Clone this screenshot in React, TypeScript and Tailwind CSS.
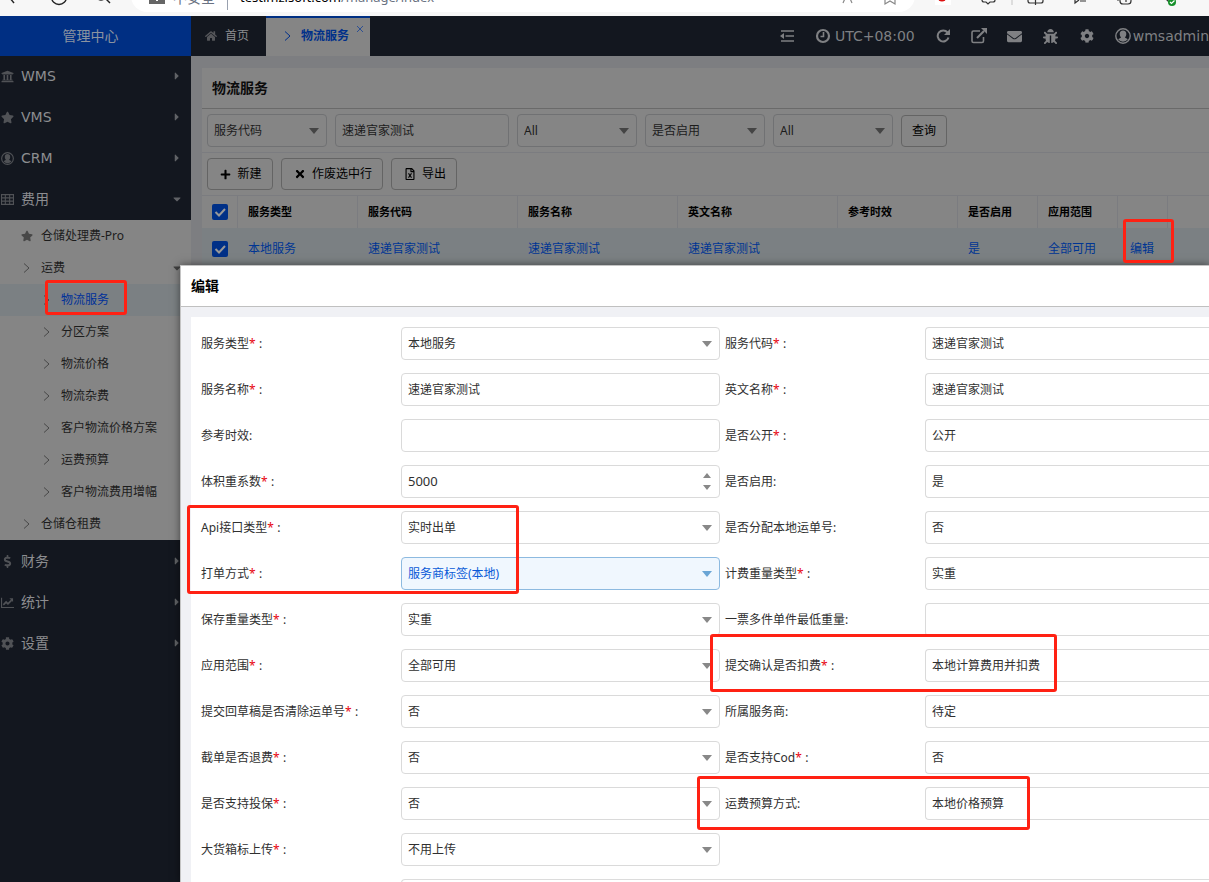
import type { ReactNode } from "react";
import {
    FaHome, FaUniversity, FaStar, FaDollarSign, FaCog,
    FaBug, FaEnvelope, FaRegFileExcel, FaPlus, FaTimes, FaCaretRight, FaCaretDown
} from "react-icons/fa";

const mainMenu = [
    { name: "WMS", icon: FaUniversity },
    { name: "VMS", icon: FaStar },
    { name: "CRM", icon: UserRing },
    { name: "费用", icon: GridIcon, open: true },
];

const subMenu = [
    { name: "仓储处理费-Pro", level: 1, star: true },
    { name: "运费", level: 1, open: true },
    { name: "物流服务", level: 2, active: true },
    { name: "分区方案", level: 2 },
    { name: "物流价格", level: 2 },
    { name: "物流杂费", level: 2 },
    { name: "客户物流价格方案", level: 2 },
    { name: "运费预算", level: 2 },
    { name: "客户物流费用增幅", level: 2 },
    { name: "仓储仓租费", level: 1 },
];

const bottomMenu = [
    { name: "财务", icon: FaDollarSign },
    { name: "统计", icon: TrendIcon },
    { name: "设置", icon: FaCog },
];

const columns = [
    { title: "服务类型", value: "本地服务", width: "w-[120px]" },
    { title: "服务代码", value: "速递官家测试", width: "w-40" },
    { title: "服务名称", value: "速递官家测试", width: "w-40" },
    { title: "英文名称", value: "速递官家测试", width: "w-40" },
    { title: "参考时效", value: "", width: "w-[120px]" },
    { title: "是否启用", value: "是", width: "w-20" },
    { title: "应用范围", value: "全部可用", width: "w-20" },
];

type FieldDef = {
    label: string;
    value: string;
    required?: boolean;
    kind?: "select" | "text" | "number";
    focused?: boolean;
};

// left and right field of every form row
const rows: [FieldDef, FieldDef | null][] = [
    [{ label: "服务类型", value: "本地服务", required: true }, { label: "服务代码", value: "速递官家测试", required: true, kind: "text" }],
    [{ label: "服务名称", value: "速递官家测试", required: true, kind: "text" }, { label: "英文名称", value: "速递官家测试", required: true, kind: "text" }],
    [{ label: "参考时效", value: "", kind: "text" }, { label: "是否公开", value: "公开", required: true }],
    [{ label: "体积重系数", value: "5000", required: true, kind: "number" }, { label: "是否启用", value: "是" }],
    [{ label: "Api接口类型", value: "实时出单", required: true }, { label: "是否分配本地运单号", value: "否" }],
    [{ label: "打单方式", value: "服务商标签(本地)", required: true, focused: true }, { label: "计费重量类型", value: "实重", required: true }],
    [{ label: "保存重量类型", value: "实重", required: true }, { label: "一票多件单件最低重量", value: "", kind: "text" }],
    [{ label: "应用范围", value: "全部可用", required: true }, { label: "提交确认是否扣费", value: "本地计算费用并扣费", required: true }],
    [{ label: "提交回草稿是否清除运单号", value: "否", required: true }, { label: "所属服务商", value: "待定" }],
    [{ label: "截单是否退费", value: "否", required: true }, { label: "是否支持Cod", value: "否", required: true }],
    [{ label: "是否支持投保", value: "否", required: true }, { label: "运费预算方式", value: "本地价格预算" }],
    [{ label: "大货箱标上传", value: "不用上传", required: true }, null],
];

export default function App() {
    return (
        <div className="relative h-screen overflow-hidden flex flex-col bg-[#7d7e81] text-xs text-[#1c1c1c] font-['Noto_Sans','Noto_Sans_CJK_SC',sans-serif]">
            <BrowserStrip />
            <div className="flex flex-1 min-h-0">
                <Sidebar />
                <div className="flex-1 min-w-0 flex flex-col">
                    <TopBar />
                    <ServiceList />
                </div>
            </div>
            <EditDialog />

            {/* Marked areas */}
            <Mark className="left-[45px] top-[280px] w-[82px] h-[35px]" />
            <Mark className="left-[1123px] top-[219px] w-[51px] h-11" />
            <Mark className="left-[187px] top-[505px] w-[332px] h-[89px]" />
            <Mark className="left-[710px] top-[634px] w-[347px] h-[58px]" />
            <Mark className="left-[697px] top-[776px] w-[333px] h-[54px]" />
        </div>
    );
}

function Mark({ className }: { className: string }) {
    return <div className={`absolute border-3 border-[#ff2113] rounded-[3px] pointer-events-none ${className}`} />;
}

function BrowserStrip() {
    return (
        <div className="relative h-4 shrink-0 bg-[#f7f7f7] overflow-hidden">
            <svg className="absolute left-0 top-0" width="120" height="8" fill="none" stroke="#222" strokeWidth="1.4">
                <path d="M9 -3l5 6" />
                <circle cx="59" cy="-3" r="7.5" />
                <path d="M103 -4l7 7" />
                <circle cx="101" cy="-5" r="5" />
            </svg>
            <div className="absolute left-[131px] right-[294px] bottom-1 h-8 pt-1 rounded-b-2xl bg-white flex items-center pl-4 text-[13px] text-gray-500">
                <svg width="20" height="16" viewBox="0 0 20 16">
                    <path d="M2 14h16V7H2z" fill="#666" />
                    <path d="M10 7v4" stroke="#fff" strokeWidth="2" />
                </svg>
                <span className="ml-1.5 w-11 text-sm">不安全</span>
                <span className="ml-2.5 mr-3 w-px h-6 bg-gray-400" />
                <span className="text-black">testimzisoft.com</span>
                <span>/manage/index</span>
            </div>
            <svg className="absolute right-0 top-0" width="377" height="8" fill="none" stroke="#333" strokeWidth="1.2">
                <path d="M11 3l4-9M20 3l-4-9M53 -3v7l5-3 5 3v-7" stroke="#888" />
                <path d="M103 0h16v5h-16z" fill="#fff" stroke="none" />
                <circle cx="110" cy="-3" r="4.5" fill="#d11" stroke="none" />
                <path d="M150 -3v3q0 2 2 2h2l2 2 2-2h3q2 0 2-2v-3" />
                <path d="M180 -3v8" stroke="#ccc" />
                <path d="M196 -3v4q0 2 2 2h11q2 0 2-2v-4M203.500-3v8" />
                <path d="M243 -3v6l4-3M248 1h6" />
                <path d="M288 -3v4q0 3 3 3h5q3 0 3-3v-4M294 -3v5M285 0h2" />
                <path d="M332 -3l5 5" />
                <circle cx="340" cy="2" r="4" fill="#16902a" stroke="none" />
                <path d="M338 2l1.500 1.500 3-3" stroke="#fff" />
            </svg>
        </div>
    );
}

function Sidebar() {
    return (
        <nav className="w-[191px] shrink-0 flex flex-col bg-[#13171f]">
            <div className="h-10 shrink-0 bg-[#002f83] text-[#8b93a0] text-sm flex items-center justify-center pr-2.5">管理中心</div>
            {mainMenu.map((item) => <MenuItem key={item.name} {...item} />)}
            <div className="bg-[#858585] mb-px">
                {subMenu.map((item) => (
                    <a
                        key={item.name}
                        href="#"
                        className={`h-8 flex items-center gap-2 ${item.level === 2 ? "pl-10" : "pl-5"} ${item.active ? "bg-[#7b8083] text-[#00309a]" : ""}`}
                    >
                        <span className="w-[13px] flex justify-center text-[#484848]">
                            {item.star ? <FaStar size={12} /> : <Chevron />}
                        </span>
                        {item.name}
                        {item.open && <FaCaretDown size={12} className="ml-auto mr-2 text-[#404040]" />}
                    </a>
                ))}
            </div>
            {bottomMenu.map((item) => <MenuItem key={item.name} {...item} />)}
        </nav>
    );
}

function MenuItem({ name, icon: Icon, open }: { name: string, icon: any, open?: boolean }) {
    return (
        <a href="#" className="h-[41px] shrink-0 pb-px flex items-center text-sm text-[#8c8d90] font-['DejaVu_Sans','Noto_Sans_CJK_SC',sans-serif]">
            <span className="w-[21px] flex pl-px text-[#505256]"><Icon size={13} /></span>
            {name}
            {open
                ? <FaCaretDown size={12} className="ml-auto mr-2 text-[#606266]" />
                : <FaCaretRight size={12} className="ml-auto mr-2 text-[#606266]" />}
        </a>
    );
}

function TopBar() {
    return (
        <header className="h-10 shrink-0 bg-[#13171f] flex text-[#7f8083]">
            <a href="#" className="w-[75px] flex items-center gap-2 pl-3.5 text-[#8c8d90]">
                <FaHome size={12} className="text-[#55565a]" />
                首页
            </a>
            <a href="#" className="relative w-[104px] border-t-2 border-[#002f83] bg-[#858585] text-[#00308a] font-bold flex items-center gap-2.5 pl-[18px] pb-0.5">
                <Chevron />
                物流服务
                <svg className="absolute right-1.5 top-[7px]" width="8" height="8" stroke="#2c4f94">
                    <path d="M1 1l6 6M7 1l-6 6" />
                </svg>
            </a>
            <div className="ml-auto flex items-center text-sm font-['DejaVu_Sans',sans-serif]">
                <IconButton label="menu">
                    <svg width="14" height="12" viewBox="0 0 14 12" fill="none" stroke="currentColor" strokeWidth="1.600">
                        <path d="M1 1h13M5.500 6H14M1 11h13" />
                        <path d="M0 6l4-3v6z" fill="currentColor" stroke="none" />
                    </svg>
                </IconButton>
                <span className="flex items-center gap-1 mx-2.5">
                    <svg width="16" height="16" viewBox="0 0 16 16" fill="none" stroke="currentColor" strokeWidth="2.200">
                        <circle cx="8" cy="8" r="6" />
                        <path d="M8.500 4v4.500H5.500" strokeWidth="1.600" />
                    </svg>
                    UTC+08:00
                </span>
                <IconButton label="refresh">
                    <svg width="14" height="14" viewBox="0 0 14 14" fill="none" stroke="currentColor" strokeWidth="2">
                        <path d="M11.500 3.500A5.500 5.500 0 1 0 12.500 8.500" />
                        <path d="M14 0v6H8z" fill="currentColor" stroke="none" />
                    </svg>
                </IconButton>
                <IconButton label="open">
                    <svg width="16" height="16" viewBox="0 0 16 16" fill="none" stroke="currentColor" strokeWidth="1.600">
                        <path d="M9 3H2.500Q1 3 1 4.500v8.500Q1 14.500 2.500 14.500h8.500Q12.500 14.500 12.500 13V9" />
                        <path d="M6 10l7-7" strokeWidth="2.200" />
                        <path d="M16 0v6L10 0z" fill="currentColor" stroke="none" />
                    </svg>
                </IconButton>
                <IconButton label="mail"><FaEnvelope size={15} /></IconButton>
                <IconButton label="debug"><FaBug size={15} /></IconButton>
                <IconButton label="settings"><FaCog size={14} /></IconButton>
                <button className="flex items-center gap-0.5 pl-2.5"><UserRing size={16} />wmsadmin</button>
            </div>
        </header>
    );
}

function IconButton({ label, children }: { label: string, children: ReactNode }) {
    return <button aria-label={label} className="w-9 flex justify-center">{children}</button>;
}

function ServiceList() {
    return (
        <main className="flex-1 mt-3 ml-[11px] bg-[#858585] overflow-hidden">
            <h1 className="h-[41px] border-b border-[#6a6a6a] px-2.5 flex items-center text-sm font-bold text-[#0b0b0b]">物流服务</h1>
            <div className="h-11 border-b border-[#7b7c80] flex items-center gap-2 pl-[5px]">
                <FilterSelect label="搜索字段" value="服务代码" />
                <input aria-label="关键字" defaultValue="速递官家测试" className="w-[174px] h-[33px] rounded border border-[#707173] px-1.5 pb-0.5" />
                <FilterSelect label="类型" value="All" />
                <FilterSelect label="状态字段" value="是否启用" />
                <FilterSelect label="状态" value="All" />
                <button className="w-[46px] h-8 rounded border border-[#646464] text-black">查询</button>
            </div>
            <div className="h-[43px] border-b border-[#7b7c80] flex items-center gap-2 pl-[5px] text-black">
                <button className="w-[66px] h-8 rounded border border-[#646464] flex items-center justify-center gap-1.5 pl-0.5"><FaPlus size={11} />新建</button>
                <button className="w-[102px] h-8 rounded border border-[#646464] flex items-center justify-center gap-1.5 pl-0.5"><FaTimes size={12} />作废选中行</button>
                <button className="w-[66px] h-8 rounded border border-[#646464] flex items-center justify-center gap-1.5 pl-0.5"><FaRegFileExcel size={12} />导出</button>
            </div>
            <table className="w-full table-fixed text-left border-separate border-spacing-0">
                <thead>
                    <tr className="h-8 text-[11px] text-black">
                        <th className="w-9 border-r border-[#7b7c80] pl-2.5"><Check label="全选" /></th>
                        {columns.map((col) => (
                            <th key={col.title} className={`${col.width} border-r border-[#7b7c80] px-2.5 font-bold`}>{col.title}</th>
                        ))}
                        <th className="w-[50px] border-r border-[#7b7c80]" />
                        <th />
                    </tr>
                </thead>
                <tbody>
                    <tr className="h-[41px] bg-[#7b8083] text-[#003593]">
                        <td className="pl-2.5"><Check label="选择" /></td>
                        {columns.map((col) => <td key={col.title} className="px-2.5">{col.value}</td>)}
                        <td className="pl-3"><a href="#">编辑</a></td>
                        <td />
                    </tr>
                </tbody>
            </table>
        </main>
    );
}

function Check({ label }: { label: string }) {
    return (
        <span className="relative block size-4">
            <input type="checkbox" defaultChecked aria-label={label} className="appearance-none block size-4 rounded-xs bg-[#003087]" />
            <svg className="absolute inset-0 pointer-events-none" width="16" height="16" fill="none" stroke="#989898" strokeWidth="2">
                <path d="M3.500 8l3.500 3.500L13 5" />
            </svg>
        </span>
    );
}

function FilterSelect({ label, value }: { label: string, value: string }) {
    return (
        <div className="relative w-[120px] h-[33px]">
            <select aria-label={label} className="appearance-none w-full h-full rounded border border-[#707173] px-1.5">
                <option>{value}</option>
            </select>
            <Arrow className="absolute right-2 top-3.5 text-[#444]" />
        </div>
    );
}

function EditDialog() {
    return (
        <section className="absolute left-[180px] right-0 top-[265px] bottom-0 overflow-hidden border-l border-t border-[#c4c4c4] bg-[#f0f1f5] text-[#303030] shadow-[0_0_8px_rgba(0,0,0,0.5)]">
            <h2 className="h-[41px] bg-white border-b border-[#c0c0c0] px-2.5 flex items-center text-sm font-bold text-black">编辑</h2>
            <form className="mt-2.5 ml-2.5 pl-2.5 pt-2.5 bg-white grid grid-cols-[195px_minmax(0,319fr)_195px_minmax(0,284fr)] gap-x-[5px] gap-y-[13px]">
                {rows.map(([left, right]) => (
                    <FormRow key={left.label} left={left} right={right} />
                ))}
                <textarea aria-label="备注" className="col-start-2 col-span-3 h-20 resize-none rounded-l border border-r-0 border-[#dcdcdc]" />
            </form>
        </section>
    );
}

function FormRow({ left, right }: { left: FieldDef, right: FieldDef | null }) {
    return (
        <>
            <Field field={left} />
            {right ? <Field field={right} last /> : <div className="col-span-2" />}
        </>
    );
}

function Field({ field, last }: { field: FieldDef, last?: boolean }) {
    const { label, value, required, kind = "select", focused } = field;
    const box = `appearance-none w-full h-[33px] px-1.5 border ${last ? "rounded-l border-r-0" : "rounded"} ${focused ? "border-[#8dbae0] bg-[#f0f7fe] text-[#0a5ad8]" : "border-[#dadada] bg-white"}`;
    return (
        <>
            <label htmlFor={label} className="h-[33px] flex items-center whitespace-nowrap">
                {label}
                {required && <span className="w-2.5 text-red-600">*</span>}:
            </label>
            <div className="relative">
                {kind === "select"
                    ? <select id={label} className={box}><option>{value}</option></select>
                    : <input id={label} defaultValue={value} className={`${box} pb-0.5 ${kind === "number" ? "text-[13px]" : ""}`} />}
                {kind === "select" && !last && (
                    <Arrow className={`absolute right-2 top-3.5 ${focused ? "text-[#6aa5d5]" : "text-[#888]"}`} />
                )}
                {kind === "number" && (
                    <svg className="absolute right-2 top-2 text-[#888]" width="10" height="18" fill="currentColor">
                        <path d="M1 5l4-5 4 5zM1 12h8l-4 5z" />
                    </svg>
                )}
            </div>
        </>
    );
}

function Arrow({ className }: { className: string }) {
    return (
        <svg className={`pointer-events-none ${className}`} width="10" height="6" fill="currentColor">
            <path d="M0 0h10L5 6z" />
        </svg>
    );
}

function Chevron() {
    return (
        <svg width="7" height="10" fill="none" stroke="currentColor">
            <path d="M1 .5l5 4.500L1 9.500" />
        </svg>
    );
}

function UserRing({ size }: { size: number }) {
    return (
        <svg width={size} height={size} viewBox="0 0 16 16" fill="none" stroke="currentColor">
            <circle cx="8" cy="8" r="7.2" strokeWidth="1.400" />
            <path d="M8 2.500a3.500 3.500 0 0 1 3.300 3.600c0 1.600-.6 2.700-1.400 3.500l3 1.700A6.200 6.200 0 0 1 3.100 11.300l3-1.700C5.300 8.800 4.700 7.700 4.700 6.100A3.500 3.500 0 0 1 8 2.500z" fill="currentColor" stroke="none" />
        </svg>
    );
}

function TrendIcon({ size }: { size: number }) {
    return (
        <svg width={size} height={size} viewBox="0 0 14 14" fill="none" stroke="currentColor" strokeWidth="1.200">
            <path d="M.6 2v10.400H14" />
            <path d="M2.500 9.500l3-3 2 2 4-4" strokeWidth="1.800" />
            <path d="M13 2.500v4L9 2.500z" fill="currentColor" stroke="none" />
        </svg>
    );
}

function GridIcon({ size }: { size: number }) {
    return (
        <svg width={size} height={size} viewBox="0 0 12 12" fill="none" stroke="currentColor">
            <path d="M.5 1.500h11v9H.5zM.5 4.500h11M.5 7.500h11M4 1.500v9M8 1.500v9" />
        </svg>
    );
}
